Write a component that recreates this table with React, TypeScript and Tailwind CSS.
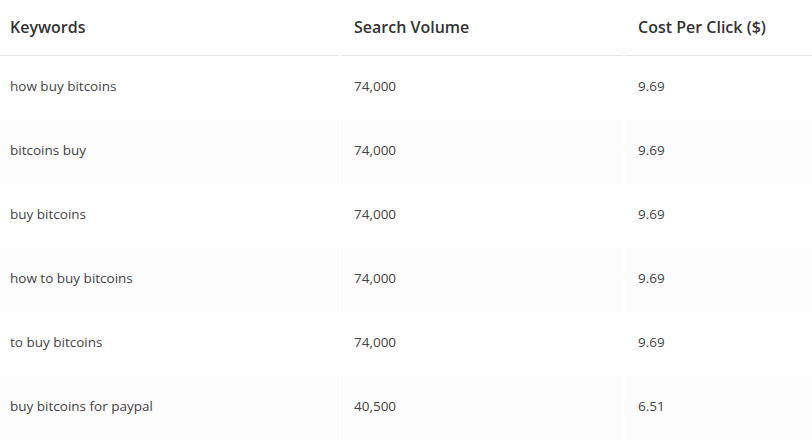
const rows = [
  { keyword: "how buy bitcoins", volume: "74,000", cpc: "9.69" },
  { keyword: "bitcoins buy", volume: "74,000", cpc: "9.69" },
  { keyword: "buy bitcoins", volume: "74,000", cpc: "9.69" },
  { keyword: "how to buy bitcoins", volume: "74,000", cpc: "9.69" },
  { keyword: "to buy bitcoins", volume: "74,000", cpc: "9.69" },
  { keyword: "buy bitcoins for paypal", volume: "40,500", cpc: "6.51" },
];

const App = () => {
  return (
    <div className="w-[812px] h-[448px] overflow-hidden bg-white font-['Open_Sans',sans-serif]">
      <table className="-ml-[5px] w-[820px] border-separate border-spacing-x-[2px] border-spacing-y-0 text-left">
        <thead>
          <tr className="h-[56px] text-[16px] text-[#333]">
            <th className="w-[342px] border-b border-[#e6e6e6] pb-[2px] pl-[13px] font-semibold">Keywords</th>
            <th className="w-[282px] border-b border-[#e6e6e6] pb-[2px] pl-[13px] font-semibold">Search Volume</th>
            <th className="border-b border-[#e6e6e6] pb-[2px] pl-[13px] font-semibold">Cost Per Click ($)</th>
          </tr>
        </thead>
        <tbody>
          {rows.map((row, i) => (
            <tr key={row.keyword} className="h-[64px] text-[13.5px] text-[#444]">
              <td className={`pb-1 pl-[13px] ${i % 2 === 1 ? "bg-[#fcfcfc]" : "bg-white"}`}>{row.keyword}</td>
              <td className={`pb-1 pl-[13px] ${i % 2 === 1 ? "bg-[#fcfcfc]" : "bg-white"}`}>{row.volume}</td>
              <td className={`pb-1 pl-[13px] ${i % 2 === 1 ? "bg-[#fcfcfc]" : "bg-white"}`}>{row.cpc}</td>
            </tr>
          ))}
        </tbody>
      </table>
    </div>
  );
};

export default App;
